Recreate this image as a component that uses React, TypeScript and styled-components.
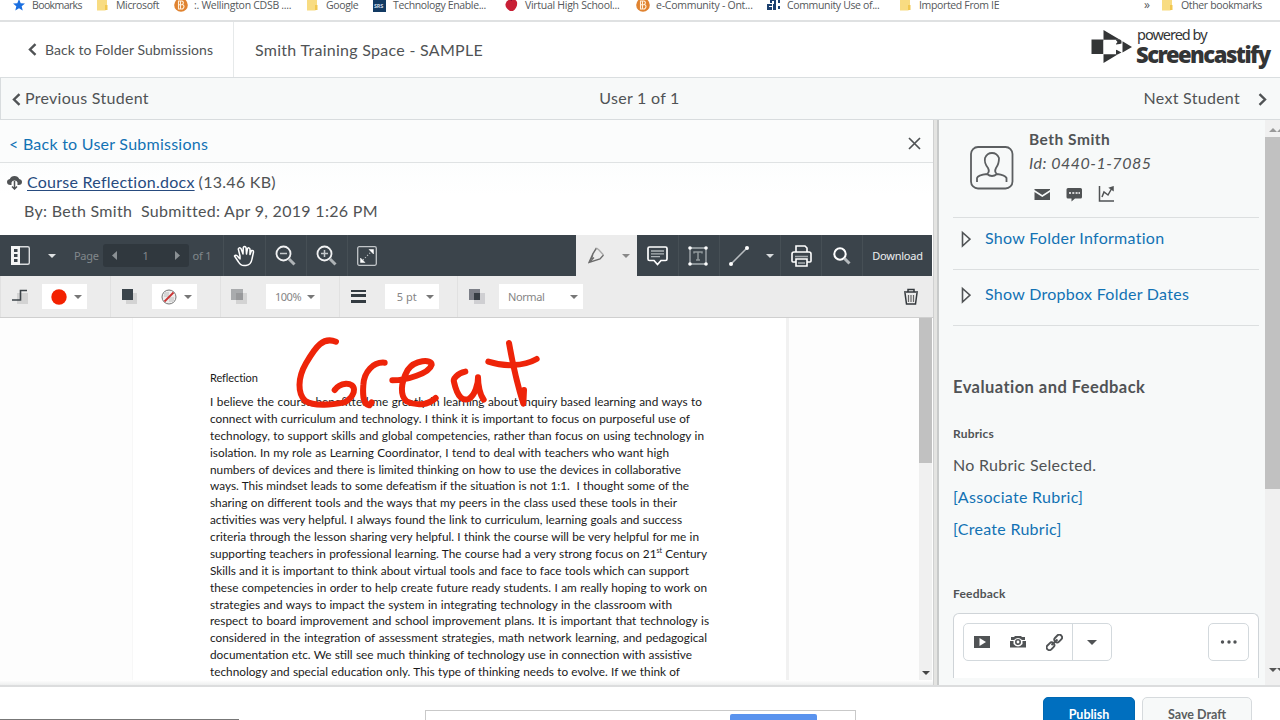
import React from 'react';
import styled, { createGlobalStyle } from 'styled-components';

const Global = createGlobalStyle`
  * { box-sizing: border-box; }
  body { margin: 0; overflow: hidden; background: #fff; }
`;

const ink = '#505355';
const blue = '#1272b4';

const Screen = styled.div`
  position: relative;
  display: flex;
  flex-direction: column;
  width: 1280px;
  height: 720px;
  overflow: hidden;
  background: #fff;
  color: ${ink};
  font: 16px/20px Lato, sans-serif;
  white-space: pre;
`;

/* Text with its own size and tracking */
const Label = styled.span<{ $size?: number; $track?: number; $weight?: number; $color?: string }>`
  font-size: ${p => p.$size ?? 16}px;
  letter-spacing: ${p => p.$track ?? 0.28}px;
  font-weight: ${p => p.$weight ?? 400};
  color: ${p => p.$color ?? 'inherit'};
`;

const BookmarkBar = styled.nav`
  display: flex;
  flex: none;
  height: 22px;
  padding-left: 12px;
  border-bottom: 2px solid #dfe1e2;
  font: 10.5px/10px "Open Sans", sans-serif;
  color: #55585b;
`;
const Bookmark = styled.div<{ $w: number; $track?: number }>`
  display: flex;
  flex: none;
  gap: 6px;
  width: ${p => p.$w}px;
  height: 12px;
  letter-spacing: ${p => p.$track ?? -0.35}px;
  svg { flex: none; overflow: visible; }
`;
const Overflow = styled.div`
  width: 27px;
  padding-left: 10px;
  font-size: 12px;
  line-height: 9px;
`;

const Header = styled.header`
  display: flex;
  flex: none;
  height: 56px;
  border-bottom: 1px solid #dadee0;
`;
const BackLink = styled.div`
  display: flex;
  align-items: center;
  gap: 8px;
  width: 234px;
  padding-left: 28px;
  border-right: 1px solid #e6e9ea;
`;
const SpaceTitle = styled.div`
  display: flex;
  flex: 1;
  align-items: center;
  padding-left: 21px;
`;
const Brand = styled.div`
  display: flex;
  width: 190px;
  gap: 3px;
  padding-top: 4px;
  color: #333536;
`;
const BrandWords = styled.div`
  display: flex;
  flex-direction: column;
  font-family: "Noto Sans", sans-serif;
`;
const Powered = styled.span`
  padding-left: 1px;
  font-size: 14.5px;
  line-height: 17px;
  letter-spacing: -1px;
`;
const BrandName = styled.span`
  font-size: 22px;
  font-weight: 900;
  line-height: 23px;
  letter-spacing: -1.5px;
`;

const StudentNav = styled.div`
  display: grid;
  grid-template-columns: 1fr 1fr 1fr;
  align-items: center;
  flex: none;
  height: 42px;
  padding: 0 13px 2px 11px;
  border-bottom: 1px solid #d8dcde;
  border-left: 1px solid #d8dcde;
  background: #f7f9f9;
`;
const NavCell = styled.div<{ $justify: string; $gap?: number }>`
  display: flex;
  align-items: center;
  justify-content: ${p => p.$justify};
  gap: ${p => p.$gap ?? 0}px;
  svg { margin-top: 3px; }
`;

const Main = styled.main`
  display: flex;
  flex: none;
  height: 567px;
  border-bottom: 2px solid #dcddde;
`;
const Viewer = styled.section`
  display: flex;
  flex-direction: column;
  width: 933px;
`;
const ViewerTop = styled.div`
  display: flex;
  align-items: center;
  justify-content: space-between;
  height: 43px;
  padding: 5px 12px 0 9px;
  border-bottom: 1px solid #dfe2e3;
  background: #fbfcfc;
`;
const FileInfo = styled.div`
  height: 72px;
  padding-top: 9px;
  background: linear-gradient(#fcfdfd, #fff 45%);
`;
const FileRow = styled.div<{ $indent: number }>`
  display: flex;
  align-items: center;
  height: 20px;
  margin-bottom: 9px;
  padding-left: ${p => p.$indent}px;
`;
const FileLink = styled.a`
  margin: 0 4px 0 5px;
  color: #274b7f;
  text-decoration: underline;
  text-underline-offset: 2px;
  letter-spacing: 0.25px;
`;

const Toolbar = styled.div`
  display: flex;
  flex: none;
  height: 41px;
  margin-right: 1px;
  background: #3b444b;
  color: #eceeef;
  font: 11px/14px "Noto Sans", sans-serif;
`;
const Tool = styled.div<{ $w: number; $line?: boolean; $active?: boolean; $gap?: number; $pad?: number }>`
  display: flex;
  flex: none;
  align-items: center;
  justify-content: center;
  gap: ${p => p.$gap ?? 0}px;
  width: ${p => p.$w}px;
  padding-left: ${p => p.$pad ?? 0}px;
  border-left: 1px solid ${p => (p.$line ? '#464f55' : 'transparent')};
  background: ${p => (p.$active ? '#ececec' : 'transparent')};
  svg { flex: none; margin-left: -2px; }
`;
const PageTools = styled.div`
  display: flex;
  align-items: center;
  width: 223px;
  padding-left: 11px;
  color: #82888c;
`;
const Caret = styled.i<{ $color?: string; $size?: number; $bottom?: number }>`
  margin-bottom: ${p => p.$bottom ?? 0}px;
  border: ${p => p.$size ?? 4}px solid transparent;
  border-top-color: ${p => p.$color ?? '#777'};
  border-bottom: 0;
`;
const PanelMenu = styled.div`
  display: flex;
  justify-content: center;
  width: 44px;
`;
const Pager = styled.div`
  display: grid;
  grid-template-columns: 22px 42px 22px;
  align-items: center;
  justify-items: center;
  width: 86px;
  height: 23px;
  margin: 0 4px;
  border-radius: 3px;
  background: #30383e;
`;
const Spacer = styled.div` flex: 1; `;

const StyleBar = styled.div`
  display: flex;
  flex: none;
  height: 42px;
  border-bottom: 1px solid #cfcfcf;
  background: #ececec;
  color: #858585;
  font: 11px/14px "Noto Sans", sans-serif;
`;
const StyleGroup = styled.div<{ $w: number; $gap: number; $pad: number }>`
  display: flex;
  flex: none;
  align-items: center;
  gap: ${p => p.$gap}px;
  width: ${p => p.$w}px;
  padding-left: ${p => p.$pad}px;
  border-left: 1px solid #e1e1e1;
`;
const Picker = styled.div<{ $w: number }>`
  display: flex;
  align-items: center;
  justify-content: space-between;
  width: ${p => p.$w}px;
  height: 25px;
  padding: 0 5px 0 9px;
  background: #fff;
`;
const TrashButton = styled.div`
  display: flex;
  align-items: center;
  margin-left: 9px;
`;

const DocArea = styled.div`
  display: flex;
  flex: none;
  height: 362px;
  overflow: hidden;
  background: #fdfdfd;
`;
const Page = styled.article`
  position: relative;
  width: 657px;
  margin: 0 130px 0 132px;
  padding: 52px 0 0 77px;
  border-left: 1px solid #f7f7f7;
  border-right: 3px solid #f1f1f1;
  background: #fff;
  color: #1a1a1a;
  font-size: 11.8px;
`;
const Heading = styled.h1`
  margin: 0 0 8px;
  font-size: 11px;
  font-weight: 400;
  line-height: 16px;
  letter-spacing: -0.1px;
`;
const Line = styled.p<{ $w: number }>`
  width: ${p => p.$w}px;
  height: 16.88px;
  margin: 0;
  line-height: 16.88px;
  text-align: justify;
  text-align-last: justify;
  white-space: nowrap;
  letter-spacing: 0;
  sup { font-size: 7px; line-height: 0; }
`;
const Ink = styled.svg`
  position: absolute;
  left: 57px;
  top: -8px;
`;
const Scrollbar = styled.div<{ $w: number }>`
  display: flex;
  flex-direction: column;
  align-items: center;
  flex: none;
  width: ${p => p.$w}px;
  background: #f0f0f0;
`;
const Thumb = styled.div<{ $h: number }>`
  width: 100%;
  height: ${p => p.$h}px;
  background: #c1c1c1;
`;
const BottomFade = styled.div`
  flex: 1;
  background: linear-gradient(#fff, #eeefef);
`;
const Splitter = styled.div`
  width: 6px;
  border-left: 1px solid #d0d1d1;
  border-right: 2px solid #c8caca;
  background: #e4e4e2;
`;

const SidePanel = styled.aside`
  display: flex;
  flex-direction: column;
  width: 326px;
  padding: 0 6px 0 14px;
  background: #f7f9f9;
`;
const Profile = styled.div`
  display: flex;
  gap: 15px;
  height: 98px;
  padding: 9px 0 0 17px;
  border-bottom: 1px solid #dcdfe0;
`;
const Avatar = styled.svg`
  flex: none;
  margin-top: 17px;
`;
const Person = styled.div`
  display: flex;
  flex-direction: column;
`;
const PersonId = styled.em`
  margin-top: 4px;
  letter-spacing: 0.5px;
`;
const PersonActions = styled.div`
  display: flex;
  gap: 15px;
  margin: 13px 0 0 5px;
`;
const Disclosure = styled.div<{ $h: number; $top: number }>`
  display: flex;
  align-items: flex-start;
  gap: 14px;
  height: ${p => p.$h}px;
  padding: ${p => p.$top}px 0 0 8px;
  border-bottom: 1px solid #dcdfe0;
  color: ${blue};
`;
const SideLine = styled.div<{ $top: number }>`
  height: 20px;
  margin-top: ${p => p.$top}px;
`;
const Editor = styled.div`
  display: flex;
  justify-content: space-between;
  align-items: flex-start;
  height: 65px;
  margin-top: 11px;
  padding: 9px;
  border: 1px solid #cfd4d8;
  border-bottom: 0;
  border-radius: 6px 6px 0 0;
  background: #fff;
`;
const ButtonGroup = styled.div<{ $w: number }>`
  display: flex;
  align-items: center;
  justify-content: center;
  width: ${p => p.$w}px;
  height: 38px;
  border: 1px solid #d3d9dd;
  border-radius: 5px;
`;
const EditorButton = styled.div<{ $w: number; $line?: boolean }>`
  display: flex;
  align-items: center;
  justify-content: center;
  flex: none;
  width: ${p => p.$w}px;
  height: 36px;
  border-left: ${p => (p.$line ? '1px solid #d3d9dd' : '0')};
`;

const Footer = styled.footer`
  display: flex;
  justify-content: flex-end;
  gap: 7px;
  height: 33px;
  padding: 10px 28px 0 0;
`;
const FooterButton = styled.button<{ $w: number; $primary?: boolean }>`
  flex: none;
  width: ${p => p.$w}px;
  height: 36px;
  padding: 0;
  border: 1px solid ${p => (p.$primary ? '#0068b3' : '#d6dadd')};
  border-radius: 5px;
  background: ${p => (p.$primary ? '#006fbf' : '#f7f9f9')};
  color: ${p => (p.$primary ? '#fff' : '#5a5d5f')};
  font: 700 12.5px/34px Lato, sans-serif;
`;
const Notice = styled.div`
  position: absolute;
  left: 425px;
  top: 710px;
  display: flex;
  justify-content: flex-end;
  width: 431px;
  height: 24px;
  padding: 3px 38px 0 0;
  border: 1px solid #c9c9c9;
  background: #fff;
`;
const NoticeButton = styled.div`
  width: 87px;
  height: 20px;
  border-radius: 2px;
  background: #5a93ee;
`;
const StatusEdge = styled.div`
  position: absolute;
  left: 0;
  bottom: 0;
  width: 239px;
  height: 1px;
  background: #777;
`;

const Chevron = ({ right = false }: { right?: boolean }) => (
  <svg width="9" height="13" viewBox="0 0 9 13" fill="none" stroke={ink} strokeWidth="2.4">
    <path d={right ? 'M1.5 1.2L7 6.5L1.5 11.8' : 'M7.5 1.2L2 6.5L7.5 11.8'} />
  </svg>
);
const FolderIcon = () => (
  <svg width="14" height="12"><path d="M1 -4H11V8Q11 11 8 10.500H1Z" fill="#f8dc82" /><path d="M9 5h2.500v5H9z" fill="#f1c74f" /></svg>
);
const BrightspaceIcon = () => (
  <svg width="14" height="12">
    <circle cx="7" cy="5" r="6.800" fill="#e08330" />
    <path d="M4.500 1H8Q10.500 2 8.500 4.500Q11.500 6 8.500 9H4.500ZM4.500 4.700H8M6.500 1V9" fill="none" stroke="#fff1dc" strokeWidth="1.100" />
  </svg>
);
const Swatch = ({ mode }: { mode: string }) => (
  <svg width="17" height="17" viewBox="0 0 17 17">
    <rect x="5" y="5" width="11" height="11" fill={mode === 'blend' ? '#cfcfd2' : '#d3d3d3'} />
    {mode === 'stroke' && <path d="M0 12H8.500V2.500H15" fill="none" stroke="#3d4449" strokeWidth="1.600" />}
    {mode === 'fill' && <rect x="1" y="1" width="11" height="11" fill="#3b444b" />}
    {mode === 'opacity' && <><rect x="0" y="1" width="12" height="11" fill="#a9abad" /><path d="M5 5h7v7H5z" fill="#98999b" /></>}
    {mode === 'blend' && <><rect x="0" y="1" width="11" height="11" fill="#7c7f87" /><path d="M5 5h6v7H5z" fill="#363d43" /></>}
  </svg>
);

const paragraph: [React.ReactNode, number][] = [
  ['I believe the course benefitted me greatly in learning about inquiry based learning and ways to', 492],
  ['connect with curriculum and technology. I think it is important to focus on purposeful use of', 480],
  ['technology, to support skills and global competencies, rather than focus on using technology in', 494],
  ['isolation. In my role as Learning Coordinator, I tend to deal with teachers who want high', 459],
  ['numbers of devices and there is limited thinking on how to use the devices in collaborative', 471],
  ['ways. This mindset leads to some defeatism if the situation is not 1:1.\u00a0 I thought some of the', 479],
  ['sharing on different tools and the ways that my peers in the class used these tools in their', 467],
  ['activities was very helpful. I always found the link to curriculum, learning goals and success', 472],
  ['criteria through the lesson sharing very helpful. I think the course will be very helpful for me in', 489],
  [<>supporting teachers in professional learning. The course had a very strong focus on 21<sup>st</sup> Century</>, 497],
  ['Skills and it is important to think about virtual tools and face to face tools which can support', 479],
  ['these competencies in order to help create future ready students. I am really hoping to work on', 497],
  ['strategies and ways to impact the system in integrating technology in the classroom with', 462],
  ['respect to board improvement and school improvement plans. It is important that technology is', 499],
  ['considered in the integration of assessment strategies, math network learning, and pedagogical', 497],
  ['documentation etc. We still see much thinking of technology use in connection with assistive', 482],
  ['technology and special education only. This type of thinking needs to evolve. If we think of', 470],
];

export default function App() {
  return (
    <Screen>
      <Global />
      <BookmarkBar>
        <Bookmark $w={84} $track={-0.6}><svg width="14" height="12"><path d="M7 -1L8.700 3.200L13 3.500L9.700 6.300L10.700 10.500L7 8.200L3.300 10.500L4.300 6.300L1 3.500L5.300 3.200Z" fill="#1b6fe0" /></svg>Bookmarks</Bookmark>
        <Bookmark $w={78}><FolderIcon />Microsoft</Bookmark>
        <Bookmark $w={132} $track={-0.28}><BrightspaceIcon />:. Wellington CDSB ....</Bookmark>
        <Bookmark $w={67}><FolderIcon />Google</Bookmark>
        <Bookmark $w={132}>
          <svg width="14" height="12"><rect y="-2" width="13" height="14" fill="#123a63" /><text x="1" y="8" fontSize="5.500" fontWeight="700" fill="#cfdbe8" letterSpacing="-.2">SRS</text></svg>
          Technology Enable...
        </Bookmark>
        <Bookmark $w={131} $track={-0.28}><svg width="14" height="12"><path d="M6 0Q10 -2 12 2Q13 7 8 11H5Q0 8 0.500 4Q2 -1 6 0Z" fill="#c81f35" /><path d="M6 1L8 -3" stroke="#713" /></svg>Virtual High School...</Bookmark>
        <Bookmark $w={131} $track={-0.25}><BrightspaceIcon />e-Community - Ont...</Bookmark>
        <Bookmark $w={132}>
          <svg width="14" height="12" fill="#1d4170"><path d="M3 -1H9V1H5V3H3ZM0 4H5V6H2V7H5V10H0ZM7 1H9V10H6V4H7ZM11 0H13V3H11ZM11 6H13V9H11Z" /></svg>
          Community Use of...
        </Bookmark>
        <Bookmark $w={235}><FolderIcon />Imported From IE</Bookmark>
        <Overflow>»</Overflow>
        <Bookmark $w={110}><FolderIcon />Other bookmarks</Bookmark>
      </BookmarkBar>

      <Header>
        <BackLink><Chevron /><Label $size={14} $track={0.03}>Back to Folder Submissions</Label></BackLink>
        <SpaceTitle><Label>Smith Training Space - SAMPLE</Label></SpaceTitle>
        <Brand>
          <svg width="43" height="40" viewBox="0 0 43 40" fill="#333536">
            <path d="M13.500 4L30 13.700H13.500ZM13.500 28.300H28L13.500 37ZM32.500 15.300L42 21L32.500 26.500Z" />
            <path d="M1.500 13.500H13.500V28H1.500Z" />
            <path d="M26 13.500H30L31.500 14.800V17.500L26 19ZM26 28.300V23.500L31.500 26.500L28 28.300Z" />
            <path d="M13.500 14.400H26.300L27.500 16L25.500 18.500H31.700V24.500L25.500 23.500V28H13.500Z" fill="#fff" />
          </svg>
          <BrandWords><Powered>powered by</Powered><BrandName>Screencastify</BrandName></BrandWords>
        </Brand>
      </Header>

      <StudentNav>
        <NavCell $justify="flex-start" $gap={4}><Chevron /><Label>Previous Student</Label></NavCell>
        <NavCell $justify="center"><Label>User 1 of 1</Label></NavCell>
        <NavCell $justify="flex-end" $gap={18}><Label>Next Student</Label><Chevron right /></NavCell>
      </StudentNav>

      <Main>
        <Viewer>
          <ViewerTop>
            <Label $color={blue} $track={0.25}>&lt; Back to User Submissions</Label>
            <svg width="13" height="13" stroke={ink} strokeWidth="1.700"><path d="M1 1L12 12M12 1L1 12" /></svg>
          </ViewerTop>
          <FileInfo>
            <FileRow $indent={7}>
              <svg width="15" height="15" viewBox="0 0 15 15">
                <path d="M3.500 10Q0 10 0 7Q0 4.500 2.800 4Q4 1 7.500 1Q11 1 12.200 4Q15 4.500 15 7Q15 10 11.500 10H10.500V7.500Q10 5.500 7.500 5.500Q5 5.500 4.500 7.500V10Z" fill={ink} />
                <path d="M7.500 6V14M5 11.500L7.500 14L10 11.500" fill="none" stroke={ink} strokeWidth="1.500" />
              </svg>
              <FileLink>Course Reflection.docx</FileLink><Label>(13.46 KB)</Label>
            </FileRow>
            <FileRow $indent={24}><Label $track={0.3}>{'By: Beth Smith  Submitted: Apr 9, 2019 1:26 PM'}</Label></FileRow>
          </FileInfo>

          <Toolbar>
            <PageTools>
              <svg width="19" height="19" viewBox="0 0 19 19">
                <rect x=".7" y=".7" width="17.600" height="17.600" rx="1.500" fill="none" stroke="#d9dcde" strokeWidth="1.400" />
                <path d="M0 0H9V19H0Z" fill="#f4f5f5" /><path d="M3 3h3.500v3H3zM3 8h3.500v3H3zM3 13h3.500v3H3z" fill="#3b444b" />
              </svg>
              <PanelMenu><Caret $color="#dfe2e3" /></PanelMenu>
              <Label $size={11} $track={-0.3}>Page</Label>
              <Pager>
                <svg width="6" height="9"><path d="M6 0V9L1 4.500Z" fill="#8a9094" /></svg>
                <span>1</span>
                <svg width="6" height="9"><path d="M0 0V9L5 4.500Z" fill="#8a9094" /></svg>
              </Pager>
              <Label $size={11} $track={-0.2}>of 1</Label>
            </PageTools>
            <Tool $w={42} $line>
              <svg width="22" height="22" viewBox="0 0 22 22" fill="none" stroke="#fff" strokeWidth="1.500" strokeLinecap="round" strokeLinejoin="round">
                <path d="M6 13L4.500 11Q2.500 9.500 1.500 11L5.500 17Q7.500 20.500 11 20.500H13Q18 20 19 14L20.500 7Q20.500 5 18.500 5.500L17 9.500L17 4Q16 2 14.500 3.500L13.500 9L13 2.500Q11.500 .5 10.300 2.500L10 9L8 3.500Q6 2 5.300 4L7 11V14" />
              </svg>
            </Tool>
            {[false, true].map(plus => (
              <Tool key={String(plus)} $w={41} $line>
                <svg width="21" height="21" viewBox="0 0 21 21" fill="none" stroke="#f1f2f3" strokeWidth="1.800">
                  <circle cx="8.500" cy="8.500" r="7" /><path d={plus ? 'M5 8.500H12M8.500 5V12' : 'M5 8.500H12'} stroke="#c5c9cc" strokeWidth="1.500" /><path d="M14 14L19.500 19.500" stroke="#aeb3b6" strokeWidth="3" />
                </svg>
              </Tool>
            ))}
            <Tool $w={41} $line>
              <svg width="20" height="20" viewBox="0 0 20 20" fill="none" stroke="#c2c6c9" strokeWidth="1.300">
                <rect x=".7" y=".7" width="18.600" height="18.600" rx="1.500" /><path d="M6 14L14 6" strokeDasharray="1 2" /><path d="M12 3.500H16.500V8ZM3.500 12V16.500H8Z" fill="#fff" stroke="#fff" strokeWidth=".5" />
              </svg>
            </Tool>
            <Spacer />
            <Tool $w={61} $active $gap={18} $pad={6}>
              <svg width="16" height="17" viewBox="0 0 16 17" fill="none" stroke="#6c6c6c" strokeWidth="1.400">
                <path d="M8.500 1L5 6.500L1 15.500L12 12L15.500 8M1 15.500L6 10.500M5 6.500L3.500 12" /><path d="M8.500 1L11 3L15.500 8" stroke="#aaa" />
              </svg>
              <Caret $color="#888" />
            </Tool>
            <Tool $w={41} $pad={1}>
              <svg width="21" height="20" viewBox="0 0 21 20" fill="none" stroke="#fff" strokeWidth="1.700">
                <path d="M2.500 1H18.500Q20 1 20 2.500V13Q20 14.500 18.500 14.500H14L10.500 18.500L7 14.500H2.500Q1 14.500 1 13V2.500Q1 1 2.500 1Z" /><path d="M4 5H17M4 7.800H17M4 10.600H13" stroke="#aeb4b8" strokeWidth="1.300" />
              </svg>
            </Tool>
            <Tool $w={41} $line>
              <svg width="20" height="20" viewBox="0 0 20 20" fill="#fff">
                <path d="M2 2H18V18H2Z" fill="none" stroke="#a8aeb2" strokeWidth="1.300" />
                <path d="M6 7.500V6H14V7.500M10 6V14M8 14H12" fill="none" stroke="#91989c" strokeWidth="1.500" />
                <circle cx="2" cy="2" r="1.800" /><circle cx="18" cy="2" r="1.800" /><circle cx="2" cy="18" r="1.800" /><circle cx="18" cy="18" r="1.800" />
              </svg>
            </Tool>
            <Tool $w={61} $line $gap={17} $pad={5}>
              <svg width="20" height="20" viewBox="0 0 20 20" fill="#fff"><path d="M2 18L18 2" stroke="#b8bdc0" strokeWidth="1.500" /><circle cx="2" cy="18" r="2" /><circle cx="18" cy="2" r="2" /></svg>
              <Caret $color="#d8dbdd" />
            </Tool>
            <Tool $w={41} $line $pad={2}>
              <svg width="21" height="22" viewBox="0 0 21 22" fill="none" stroke="#fff" strokeWidth="1.600">
                <path d="M5 7V1H14L16 3V7M5 17H2Q1 17 1 16V9Q1 7 3 7H18Q20 7 20 9V16Q20 17 19 17H16M5 14H16V21H5Z" /><path d="M4 11.500H17M7 18H14" stroke="#a6acb0" />
              </svg>
            </Tool>
            <Tool $w={41} $line $pad={1}>
              <svg width="18" height="18" viewBox="0 0 18 18" fill="none" stroke="#fff" strokeWidth="2"><circle cx="7" cy="7" r="5.700" /><path d="M11.500 11.500L16.500 16.500" stroke="#b5babd" strokeWidth="3" /></svg>
            </Tool>
            <Tool $w={70} $line><Label $size={11} $track={-0.25}>Download</Label></Tool>
          </Toolbar>

          <StyleBar>
            <StyleGroup $w={110} $gap={13} $pad={11}>
              <Swatch mode="stroke" />
              <Picker $w={45}><svg width="16" height="16"><circle cx="8" cy="8" r="7.700" fill="#f32100" /></svg><Caret /></Picker>
            </StyleGroup>
            <StyleGroup $w={110} $gap={14} $pad={10}>
              <Swatch mode="fill" />
              <Picker $w={45}>
                <svg width="16" height="16"><circle cx="8" cy="8" r="7" fill="#eee" stroke="#777" /><path d="M3 3h5v5H3zM8 8h5v5H8z" fill="#d5d5d5" /><path d="M3.500 12.500L12.500 3.500" stroke="#c33" strokeWidth="1.800" /></svg>
                <Caret />
              </Picker>
            </StyleGroup>
            <StyleGroup $w={119} $gap={18} $pad={10}><Swatch mode="opacity" /><Picker $w={54}><Label $size={11} $track={-0.5}>100%</Label><Caret /></Picker></StyleGroup>
            <StyleGroup $w={118} $gap={18} $pad={10}>
              <svg width="17" height="15" stroke="#333b41"><path d="M1 2H16" strokeWidth="2" /><path d="M1 6.500H16M1 12.500H16" strokeWidth="3" /></svg>
              <Picker $w={54}><span>{' 5 pt'}</span><Caret /></Picker>
            </StyleGroup>
            <StyleGroup $w={436} $gap={13} $pad={11}><Swatch mode="blend" /><Picker $w={84}><Label $size={11} $track={-0.4}>Normal</Label><Caret /></Picker></StyleGroup>
            <TrashButton>
              <svg width="18" height="17" viewBox="0 0 18 17" fill="none" stroke="#34393d" strokeWidth="1.500">
                <path d="M2 4H16M6 3.500V1.500H12V3.500M3 5L4.500 16H13.500L15 5" /><path d="M6.500 7V14M9 7V14M11.500 7V14" strokeWidth="1.200" stroke="#666" />
              </svg>
            </TrashButton>
          </StyleBar>

          <DocArea>
            <Page>
              <Heading>Reflection</Heading>
              {paragraph.map(([text, w], i) => <Line key={i} $w={w}>{text}</Line>)}
              <Ink width="400" height="200" viewBox="0 0 1200 600" fill="none" stroke="#ee2409" strokeWidth="18" strokeLinecap="round" strokeLinejoin="round">
                <path d="M438 95C400 80 378 108 348 160C322 205 323 250 345 272C375 292 430 283 465 277C505 250 496 220 468 221C450 223 440 231 434 240" />
                <path d="M584 158C550 155 522 185 520 225C517 265 522 282 538 286L545 277" />
                <path d="M607 211C650 211 718 190 725 164C725 147 675 149 653 180C631 220 630 258 650 274C680 289 715 285 737 264" />
                <path d="M826 185C802 190 788 207 792 216C803 265 820 273 836 267C855 257 865 220 864 202C864 225 870 255 881 269" />
                <path d="M957 99C966 150 982 225 1000 281L1002 240" /><path d="M895 155C940 170 1000 170 1040 147" />
              </Ink>
            </Page>
            <Scrollbar $w={13}><Thumb $h={145} /><Spacer /><Caret $color="#444" $bottom={5} /></Scrollbar>
          </DocArea>
          <BottomFade />
        </Viewer>
        <Splitter />
        <SidePanel>
          <Profile>
            <Avatar width="44" height="44" viewBox="0 0 44 44" fill="none" stroke="#5c5f61" strokeWidth="1.800">
              <rect x="1" y="1" width="41.500" height="41.500" rx="7" />
              <path d="M7 36V32Q8 29 17 28Q20 26 18 22Q14 17 15 12Q17 7 22 7Q27 7 29 12Q29 18 26 22Q24 26 27 28Q35 29 36.500 32V36M17 28Q22 32 27 28" />
            </Avatar>
            <Person>
              <Label $weight={700} $size={15.5} $track={0.5}>Beth Smith</Label>
              <PersonId>Id: 0440-1-7085</PersonId>
              <PersonActions>
                <svg width="17" height="17" viewBox="0 0 17 17" fill={ink}><path d="M.5 3H16V4L8.300 9L.5 4ZM.5 6L8.300 11L16 6V14H.5Z" /></svg>
                <svg width="17" height="17" viewBox="0 0 17 17" fill={ink}><path d="M2 2H14.500Q16 2 16 3.500V11Q16 12.500 14.500 12.500H9L5.500 15.500V12.500H2Q.5 12.500 .5 11V3.500Q.5 2 2 2Z" /><path d="M3 7h2M6.300 7h2M9.600 7h2M12.500 7h1.500" stroke="#fff" strokeWidth="1.500" /></svg>
                <svg width="17" height="17" viewBox="0 0 17 17" fill="none" stroke={ink} strokeWidth="1.500"><path d="M1.500 0V15H16" /><path d="M4 11L6 6L10 9L14 2" /><path d="M12 2L15 1V4Z" fill={ink} /></svg>
              </PersonActions>
            </Person>
          </Profile>
          {[['Show Folder Information', 52, 10], ['Show Dropbox Folder Dates', 56, 14]].map(([text, h, top]) => (
            <Disclosure key={text} $h={h as number} $top={top as number}>
              <svg width="10" height="20" viewBox="0 0 10 20" fill="none" stroke={ink} strokeWidth="1.600"><path d="M1.500 4.500V18L9 11.200Z" /></svg>
              <Label>{text}</Label>
            </Disclosure>
          ))}
          <SideLine $top={51}><Label $weight={700} $size={16.5} $track={0.45}>Evaluation and Feedback</Label></SideLine>
          <SideLine $top={25}><Label $weight={700} $size={12} $track={0.2}>Rubrics</Label></SideLine>
          <SideLine $top={13}><Label>No Rubric Selected.</Label></SideLine>
          <SideLine $top={12}><Label $color={blue}>[Associate Rubric]</Label></SideLine>
          <SideLine $top={12}><Label $color={blue}>[Create Rubric]</Label></SideLine>
          <SideLine $top={43}><Label $weight={700} $size={12} $track={0.2}>Feedback</Label></SideLine>
          <Editor>
            <ButtonGroup $w={149}>
              <EditorButton $w={36}><svg width="16" height="14"><path d="M0 1H16V13H0Z" fill={ink} /><path d="M5.500 3V11L12 7Z" fill="#fff" /></svg></EditorButton>
              <EditorButton $w={36}>
                <svg width="16" height="14" viewBox="0 0 16 14" fill={ink}><path d="M1 2H4L5 1H11L12 2H15V5H12Q8 1 4 5H1ZM0 6H3.500V9Q8 14 12.500 9V6H16V12.500H0Z" /><circle cx="8" cy="7" r="2.200" fill="none" stroke={ink} strokeWidth="1.600" /></svg>
              </EditorButton>
              <EditorButton $w={36}>
                <svg width="17" height="17" viewBox="0 0 17 17" fill="none" stroke={ink} strokeWidth="1.900"><rect x="0" y="9.500" width="8.500" height="5.500" rx="2.700" transform="rotate(-45 4.500 12)" /><rect x="8" y="2" width="8.500" height="5.500" rx="2.700" transform="rotate(-45 12 4.700)" /><path d="M5.500 11L11.500 5.500" /></svg>
              </EditorButton>
              <EditorButton $w={39} $line><Caret $color={ink} $size={5} /></EditorButton>
            </ButtonGroup>
            <ButtonGroup $w={41}><svg width="18" height="4" fill={ink}><circle cx="2.500" cy="2" r="1.700" /><circle cx="9" cy="2" r="1.700" /><circle cx="15" cy="2" r="1.700" /></svg></ButtonGroup>
          </Editor>
        </SidePanel>
        <Scrollbar $w={15}>
          <svg width="15" height="17"><path d="M4 12L8 8L12 12ZM12 12L15 9V12Z" fill="#999" /></svg>
          <Thumb $h={352} />
          <Spacer />
          <svg width="15" height="21"><path d="M4 4H12L8 8ZM12 4H15V7Z" fill="#555" /></svg>
        </Scrollbar>
      </Main>

      <Footer>
        <FooterButton $w={92} $primary>Publish</FooterButton>
        <FooterButton $w={110}>Save Draft</FooterButton>
      </Footer>
      <Notice><NoticeButton /></Notice>
      <StatusEdge />
    </Screen>
  );
}
